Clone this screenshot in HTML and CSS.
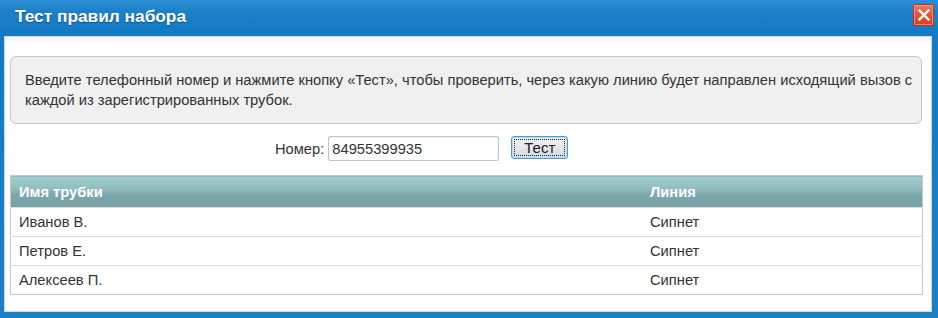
FILE: index.html
```html
<!DOCTYPE html>
<html lang="ru">
<head>
<meta charset="utf-8">
<title>Тест правил набора</title>
<link rel="stylesheet" href="styles.css">
</head>
<body>
<div class="dialog">
  <div class="titlebar">
    <span class="title">Тест правил набора</span>
    <button class="close" type="button" aria-label="Закрыть">
      <svg width="12" height="12" viewBox="0 0 12 12"><path d="M1.5 1.5 L10.5 10.5 M10.5 1.5 L1.5 10.5" stroke="#fff" stroke-width="2.4" stroke-linecap="square"/></svg>
    </button>
  </div>
  <div class="body">
    <div class="info">Введите телефонный номер и нажмите кнопку «Тест», чтобы проверить, через какую линию будет направлен исходящий вызов с каждой из зарегистрированных трубок.</div>
    <div class="form">
      <label class="label" for="num">Номер:</label>
      <input id="num" class="input" type="text" value="84955399935">
      <button class="btn" type="button"><span class="btn-text">Тест</span></button>
    </div>
    <table class="grid">
      <thead>
        <tr><th class="c1">Имя трубки</th><th>Линия</th></tr>
      </thead>
      <tbody>
        <tr><td>Иванов В.</td><td>Сипнет</td></tr>
        <tr><td>Петров Е.</td><td>Сипнет</td></tr>
        <tr><td>Алексеев П.</td><td>Сипнет</td></tr>
      </tbody>
    </table>
  </div>
</div>
</body>
</html>
```
FILE: styles.css
```css
html, body {
  margin: 0;
  padding: 0;
}
body {
  width: 938px;
  height: 318px;
  font-family: "Liberation Sans", Arial, sans-serif;
  font-size: 14.7px;
  color: #333;
  background: #1a7fc6;
}
.dialog {
  width: 938px;
  height: 318px;
  box-sizing: border-box;
  background: linear-gradient(#2f8fd6 0, #1b80c8 12px, #147ac3 30px, #1a7fc6 100%);
  padding: 0 6px 6px 4px;
  display: flex;
  flex-direction: column;
}
.titlebar {
  height: 36px;
  display: flex;
  align-items: center;
  justify-content: space-between;
  padding: 0 4px 0 11px;
  box-sizing: border-box;
}
.title {
  color: #fff;
  font-weight: bold;
  font-size: 17.3px;
  text-shadow: 0 1px 1px rgba(0,0,0,0.35);
  margin-top: -3px;
}
.close {
  width: 21px;
  height: 22px;
  margin-top: -6px;
  margin-right: -6px;
  padding: 0;
  border: 1px solid #b73322;
  border-radius: 2px;
  background: linear-gradient(#f27860, #e55238 50%, #d63e24);
  display: flex;
  align-items: center;
  justify-content: center;
  box-shadow: inset 0 0 0 1px rgba(255,190,170,0.55);
}
.body {
  flex: 1;
  background: #fff;
  border: 1px solid #cfd6dc;
  box-shadow: inset 0 3px 4px rgba(0,0,0,0.06);
  padding: 19px 9px 0 5px;
}
.info {
  background: #f0f0f0;
  border: 1px solid #c8c8c8;
  border-radius: 6px;
  padding: 13px 6px 13px 14px;
  line-height: 20px;
  color: #333;
}
.form {
  display: flex;
  justify-content: flex-start;
  align-items: center;
  margin: 12px 0 14px;
  padding-left: 265px;
  height: 25px;
}
.label {
  margin-right: 4px;
  color: #333;
}
.input {
  width: 171px;
  height: 25px;
  box-sizing: border-box;
  border: 1px solid #bfc5cc;
  border-radius: 2px;
  padding: 1px 3px 0;
  font-family: "Liberation Sans", Arial, sans-serif;
  font-size: 14.7px;
  color: #333;
  background: #fff;
  box-shadow: inset 0 1px 2px rgba(0,0,0,0.06);
}
.btn {
  margin-left: 12px;
  width: 57px;
  height: 23px;
  padding: 2px;
  margin-top: -2px;
  border: 1px solid #4a9bd0;
  border-radius: 3px;
  background: linear-gradient(#f4f6f8, #e2e6ea 55%, #d3d9de);
  box-shadow: inset 0 0 0 1px #b4dcf5;
  font-family: "Liberation Sans", Arial, sans-serif;
  font-size: 15px;
  color: #222;
  display: flex;
  align-items: stretch;
}
.btn-text {
  flex: 1;
  border: 1px dotted #222;
  line-height: 15px;
}
.grid {
  width: 913px;
  border-collapse: collapse;
  border: 1px solid #c6c6c6;
}
.grid th {
  height: 31px;
  padding: 0 8px;
  text-align: left;
  color: #fff;
  font-weight: bold;
  background: linear-gradient(#a3cfcf 0, #8fbcbe 40%, #7ca7aa 60%, #78a3a6 100%);
}
.grid th.c1 {
  width: 615px;
}
.grid td {
  height: 28px;
  padding: 0 8px;
  border-top: 1px solid #dcdcdc;
  color: #333;
}
```
